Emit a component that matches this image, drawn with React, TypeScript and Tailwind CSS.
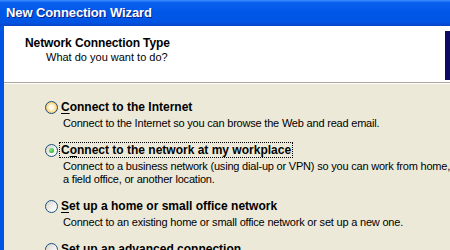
import React from 'react';

type Option = {
  before: string;
  key: string;
  after: string;
  desc: string[];
  checked?: boolean;
  hover?: boolean;
};

const options: Option[] = [
  {
    before: '',
    key: 'C',
    after: 'onnect to the Internet',
    desc: ['Connect to the Internet so you can browse the Web and read email.'],
    hover: true,
  },
  {
    before: 'C',
    key: 'o',
    after: 'nnect to the network at my workplace',
    desc: [
      'Connect to a business network (using dial-up or VPN) so you can work from home,',
      'a field office, or another location.',
    ],
    checked: true,
  },
  {
    before: '',
    key: 'S',
    after: 'et up a home or small office network',
    desc: ['Connect to an existing home or small office network or set up a new one.'],
  },
  {
    before: 'Set up an ',
    key: 'a',
    after: 'dvanced connection',
    desc: ['Connect directly to another computer using your serial, parallel, or infrared port.'],
  },
];

const Radio: React.FC<{ checked?: boolean; hover?: boolean }> = ({ checked, hover }) => (
  <span
    className={
      'relative flex items-center justify-center w-[13px] h-[13px] shrink-0 rounded-full border border-[#1c5180] ' +
      (hover
        ? 'bg-[radial-gradient(circle,#fffbe9_25%,#f9d37a_65%,#e7a92b_100%)]'
        : 'bg-[linear-gradient(135deg,#d6d3ca_0%,#f2f1ec_55%,#ffffff_100%)]')
    }
  >
    {checked && (
      <span className="w-[5px] h-[5px] rounded-full bg-[radial-gradient(circle_at_35%_35%,#7ef07e,#1f9e1f)]" />
    )}
  </span>
);

const App: React.FC = () => {
  return (
    <div className="w-[450px] h-[250px] overflow-hidden flex flex-col bg-[#0054e3] font-['Liberation_Sans',Arial,sans-serif] text-black">
      {/* Title bar */}
      <div className="h-[26px] shrink-0 flex items-center pl-[6px] bg-[linear-gradient(to_bottom,#3d8ffd_0%,#0a60ef_10%,#0058e8_45%,#0054e3_85%,#0843c9_100%)]">
        <span className="text-white font-bold text-[13px] tracking-[-0.1px] [text-shadow:1px_1px_#0a1e8a]">
          New Connection Wizard
        </span>
      </div>

      {/* Window client area (left frame border) */}
      <div className="flex-1 flex flex-col ml-[4px] bg-[#ece9d8] min-h-0 min-w-0 overflow-hidden">
        {/* Header */}
        <div className="h-[57px] shrink-0 bg-white flex border-b border-[#aca899]">
          <div className="flex-1 min-w-0 pl-[21px] pt-[10px] leading-[14px]">
            <div className="font-bold text-[12px] tracking-[-0.1px]">Network Connection Type</div>
            <div className="pl-[21px] text-[11px]">What do you want to do?</div>
          </div>
          {/* wizard picture, cut off by the window edge */}
          <div className="mt-[5px] w-[5px] h-[49px] shrink-0 bg-[#0b0b66]" />
        </div>
        <div className="h-px bg-white shrink-0" />

        {/* Options */}
        <div className="pl-[41px] pt-[16px] flex flex-col gap-[13px] text-[11px]">
          {options.map((o, i) => (
            <div key={i} className="flex flex-col">
              <div className="flex items-center h-[14px]">
                <Radio checked={o.checked} hover={o.hover} />
                <span
                  className={
                    'ml-[2px] px-[1px] font-bold text-[12px] leading-[14px] whitespace-nowrap ' +
                    (o.checked ? 'outline outline-1 outline-dotted outline-black' : '')
                  }
                >
                  {o.before}
                  <span className="underline underline-offset-[2px]">{o.key}</span>
                  {o.after}
                </span>
              </div>
              <div className="pl-[18px] mt-[3px] leading-[13px] whitespace-nowrap tracking-[-0.2px]">
                {o.desc.map((d, j) => (
                  <div key={j}>{d}</div>
                ))}
              </div>
            </div>
          ))}
        </div>
      </div>
    </div>
  );
};

export default App;
